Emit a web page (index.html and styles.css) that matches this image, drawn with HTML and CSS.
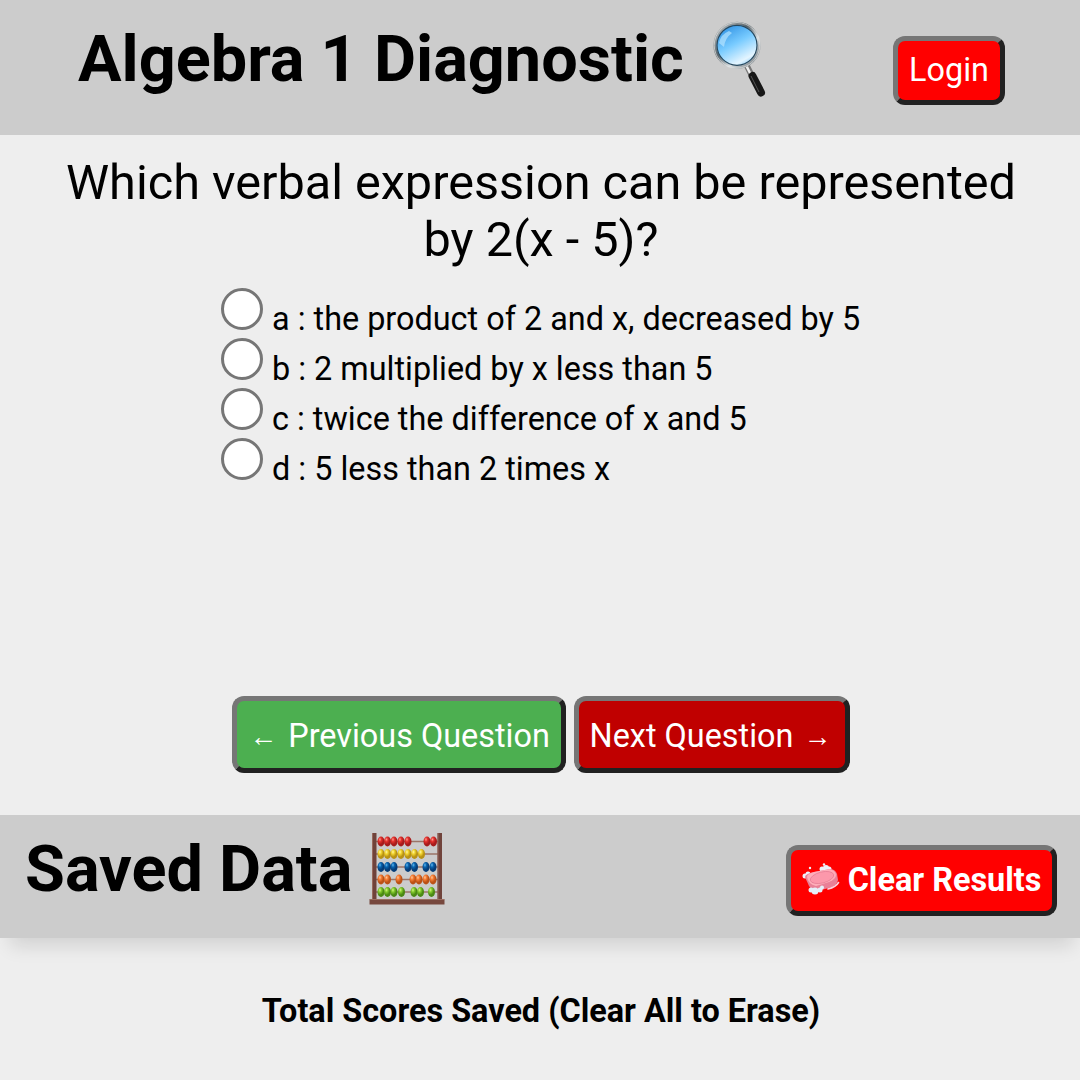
FILE: index.html
```html
<!DOCTYPE html>
<html lang="en">
<head>
<meta charset="utf-8">
<title>Algebra 1 Diagnostic</title>
<link rel="stylesheet" href="styles.css">
</head>
<body>
<header class="top-bar">
  <h1 class="title"><span class="title-text">Algebra 1 Diagnostic</span>
    <svg class="glass" viewBox="0 0 60 80" aria-hidden="true">
      <defs>
        <linearGradient id="lens" x1=".15" y1="0" x2=".7" y2="1"><stop offset="0" stop-color="#2388df"/><stop offset=".48" stop-color="#78cbff"/><stop offset=".85" stop-color="#e4f5ff"/><stop offset="1" stop-color="#83c8f6"/></linearGradient>
        <linearGradient id="rim" x1="0" y1="0" x2="1" y2="1"><stop offset="0" stop-color="#c8cccd"/><stop offset=".4" stop-color="#596267"/><stop offset=".65" stop-color="#dce0e1"/><stop offset="1" stop-color="#59636a"/></linearGradient>
      </defs>
      <path d="M36 45l4 8" stroke="#777" stroke-width="6"/>
      <path d="M35.500 45l4 8" stroke="#eee" stroke-width="2.500"/>
      <path d="M41.500 55l8.500 16.500" stroke="#171717" stroke-width="8" stroke-linecap="round"/>
      <path d="M40 55l8 16" stroke="#555" stroke-width="1"/>
      <circle cx="26" cy="24.300" r="22" fill="url(#lens)" stroke="url(#rim)" stroke-width="3.200"/>
      <circle cx="26" cy="24.300" r="20" fill="none" stroke="#28485d" stroke-width="1.200"/>
      <circle cx="26" cy="24.300" r="22.800" fill="none" stroke="#e0e2e2" stroke-width=".7"/>
      <path d="M8 22Q10 13 18 10L21 12Q14 17 13 26Z" fill="#b5e4ff" opacity=".7"/>
    </svg>
  </h1>
  <button class="btn login">Login</button>
</header>
<main class="quiz">
  <p class="question">Which verbal expression can be represented<br>by 2(x - 5)?</p>
  <div class="answers">
    <label class="answer"><input class="radio" type="radio" name="answer"><span>a : the product of 2 and x, decreased by 5</span></label>
    <label class="answer"><input class="radio" type="radio" name="answer"><span>b : 2 multiplied by x less than 5</span></label>
    <label class="answer"><input class="radio" type="radio" name="answer"><span>c : twice the difference of x and 5</span></label>
    <label class="answer"><input class="radio" type="radio" name="answer"><span>d : 5 less than 2 times x</span></label>
  </div>
  <div class="nav">
    <button class="btn previous"><span class="arrow">←</span><span>Previous Question</span></button>
    <button class="btn next"><span>Next Question</span><span class="arrow">→</span></button>
  </div>
</main>
<section class="saved-bar">
  <h2 class="saved-title"><span class="saved-text">Saved Data</span>
    <svg class="abacus" viewBox="0 0 76 72" aria-hidden="true">
      <defs>
        <radialGradient id="red" cx=".35" cy=".3"><stop stop-color="#ff9a8d"/><stop offset=".45" stop-color="#e2302c"/><stop offset="1" stop-color="#a71c1c"/></radialGradient>
        <radialGradient id="yellow" cx=".35" cy=".3"><stop stop-color="#fff7a0"/><stop offset=".45" stop-color="#f0d22e"/><stop offset="1" stop-color="#b99213"/></radialGradient>
        <radialGradient id="blue" cx=".35" cy=".3"><stop stop-color="#61b7ef"/><stop offset=".45" stop-color="#0864ae"/><stop offset="1" stop-color="#063d78"/></radialGradient>
        <radialGradient id="orange" cx=".35" cy=".3"><stop stop-color="#ffc799"/><stop offset=".45" stop-color="#f57b32"/><stop offset="1" stop-color="#bb5116"/></radialGradient>
        <radialGradient id="green" cx=".35" cy=".3"><stop stop-color="#d5f582"/><stop offset=".45" stop-color="#81c82c"/><stop offset="1" stop-color="#4b8914"/></radialGradient>
        <ellipse id="bead" rx="3.500" ry="5"/>
      </defs>
      <path d="M6 8.500H71M6 21H71M6 34H71M6 46.500H71M6 59H71" stroke="#9b7467" stroke-width="1.300"/>
      <g fill="url(#red)"><use href="#bead" x="12" y="8.500"/><use href="#bead" x="18.500" y="8.500"/><use href="#bead" x="25" y="8.500"/><use href="#bead" x="32" y="8.500"/><use href="#bead" x="39" y="8.500"/><use href="#bead" x="58" y="8.500"/><use href="#bead" x="64.500" y="8.500"/></g>
      <g fill="url(#yellow)"><use href="#bead" x="12" y="21"/><use href="#bead" x="18.500" y="21"/><use href="#bead" x="25" y="21"/><use href="#bead" x="32" y="21"/><use href="#bead" x="39" y="21"/><use href="#bead" x="45.500" y="21"/><use href="#bead" x="52.500" y="21"/></g>
      <g fill="url(#blue)"><use href="#bead" x="12" y="34"/><use href="#bead" x="18.500" y="34"/><use href="#bead" x="25" y="34"/><use href="#bead" x="39" y="34"/><use href="#bead" x="45.500" y="34"/><use href="#bead" x="57" y="34"/><use href="#bead" x="64" y="34"/></g>
      <g fill="url(#orange)"><use href="#bead" x="12" y="46.500"/><use href="#bead" x="18.500" y="46.500"/><use href="#bead" x="30" y="46.500"/><use href="#bead" x="44" y="46.500"/><use href="#bead" x="50" y="46.500"/><use href="#bead" x="57" y="46.500"/><use href="#bead" x="64" y="46.500"/></g>
      <g fill="url(#green)"><use href="#bead" x="12" y="59"/><use href="#bead" x="18.500" y="59"/><use href="#bead" x="25" y="59"/><use href="#bead" x="32.500" y="59"/><use href="#bead" x="45" y="59"/><use href="#bead" x="51.500" y="59"/><use href="#bead" x="62.500" y="59"/></g>
      <path d="M3 0h4.500v67H3zM68.500 0H73v67h-4.500z" fill="#70433b"/>
      <path d="M3.500 0v67M69 0v67" stroke="#96685c"/>
      <path d="M.5 66.500h75v5H.5z" fill="#77483e"/><path d="M.5 66.500h75" stroke="#9b6e61"/>
    </svg>
  </h2>
  <button class="btn clear">
    <svg class="soap" viewBox="0 0 38 34" aria-hidden="true">
      <g fill="#edf1fa"><circle cx="3" cy="13" r="2.500"/><circle cx="6" cy="11" r="2.500"/><circle cx="8" cy="5" r="1.200"/><circle cx="20" cy="6" r="2.500"/><circle cx="24" cy="5" r="3"/><circle cx="27" cy="6" r="2.500"/><circle cx="22" cy="1.500" r="1.200"/></g>
      <path d="M3 14Q3 11 12 9L28 6Q33 6 35 11L36 17Q35 22 30 24L16 28Q9 27 7 23Z" fill="#e98097"/>
      <path d="M5 14Q5 11 12 9L28 6Q34 8 34 12Q34 16 27 19L14 23Q6 21 5 14" fill="#ffadb9"/>
      <ellipse cx="20" cy="14.500" rx="12" ry="5.500" transform="rotate(-14 20 14.500)" fill="#fc98ab" stroke="#df738e" stroke-width=".6"/>
      <g fill="#e6eff9"><circle cx="9" cy="27" r="2.500"/><circle cx="13" cy="28" r="3.500"/><circle cx="18" cy="27" r="2.500"/><circle cx="20" cy="24.500" r="2"/></g>
      <path d="M26 26Q34 24 36.500 19.500" fill="none" stroke="#fbd1df" stroke-width="1.600" stroke-linecap="round"/>
    </svg>
    <span>Clear Results</span>
  </button>
</section>
<h3 class="scores">Total Scores Saved (Clear All to Erase)</h3>
</body>
</html>
```
FILE: styles.css
```css
* { box-sizing: border-box; }
body { margin: 0; height: 1080px; overflow: hidden; background: #eee; color: #000; font-family: Roboto, sans-serif; }
h1, h2, h3, p { margin: 0; }
svg { display: block; flex: none; }
.top-bar { height: 135px; padding: 21px 75px 0 78px; background: #ccc; display: flex; justify-content: space-between; align-items: flex-start; }
.title { display: flex; font-size: 64.8px; line-height: 76px; white-space: nowrap; }
.glass { width: 60px; height: 80px; margin-left: 27px; }
.btn { display: flex; align-items: center; justify-content: center; padding: 0; border: 5px solid; border-color: #767676 #212121 #212121 #767676; border-radius: 12px; color: #fff; font-family: inherit; font-size: 32.4px; line-height: 40px; white-space: nowrap; }
.login { width: 112px; height: 69px; margin-top: 15px; padding-bottom: 1px; background: #f00; }
.quiz { height: 680px; display: flex; flex-direction: column; }
.question { padding: 19px 0 0 2px; text-align: center; font-size: 48.6px; line-height: 57px; white-space: nowrap; }
.answers { margin: 20px 0 0 221px; display: flex; flex-direction: column; }
.answer { height: 50px; display: flex; align-items: flex-start; gap: 9px; font-size: 32.4px; line-height: 50px; white-space: nowrap; }
.answer span { padding-top: 6px; }
.radio { appearance: none; width: 42px; height: 42px; margin: 0; flex: none; background: #fff; border: 3px solid #767676; border-radius: 50%; }
.nav { margin: auto 0 42px; padding-left: 1px; display: flex; justify-content: center; gap: 8px; }
.previous, .next { height: 77px; padding-top: 2px; }
.previous { width: 334px; padding-left: 2px; gap: 11px; background: #4caf50; }
.next { width: 276px; padding-right: 2px; gap: 10px; background: #c00000; }
.arrow { font-family: "Liberation Serif", serif; font-size: 28px; padding-top: 3px; }
.saved-bar { height: 123px; padding: 18px 23px 0 25px; background: #ccc; box-shadow: 2px 16px 18px -8px rgba(0, 0, 0, .12); display: flex; justify-content: space-between; align-items: flex-start; }
.saved-title { display: flex; font-size: 64.8px; line-height: 72px; white-space: nowrap; }
.abacus { width: 76px; height: 72px; margin-left: 17px; }
.clear { width: 271px; height: 71px; margin-top: 12px; padding-bottom: 1px; background: #f00; font-weight: 700; gap: 8px; }
.soap { width: 38px; height: 34px; }
.scores { padding: 53px 0 0 2px; text-align: center; font-size: 32.4px; line-height: 40px; white-space: nowrap; }
```
